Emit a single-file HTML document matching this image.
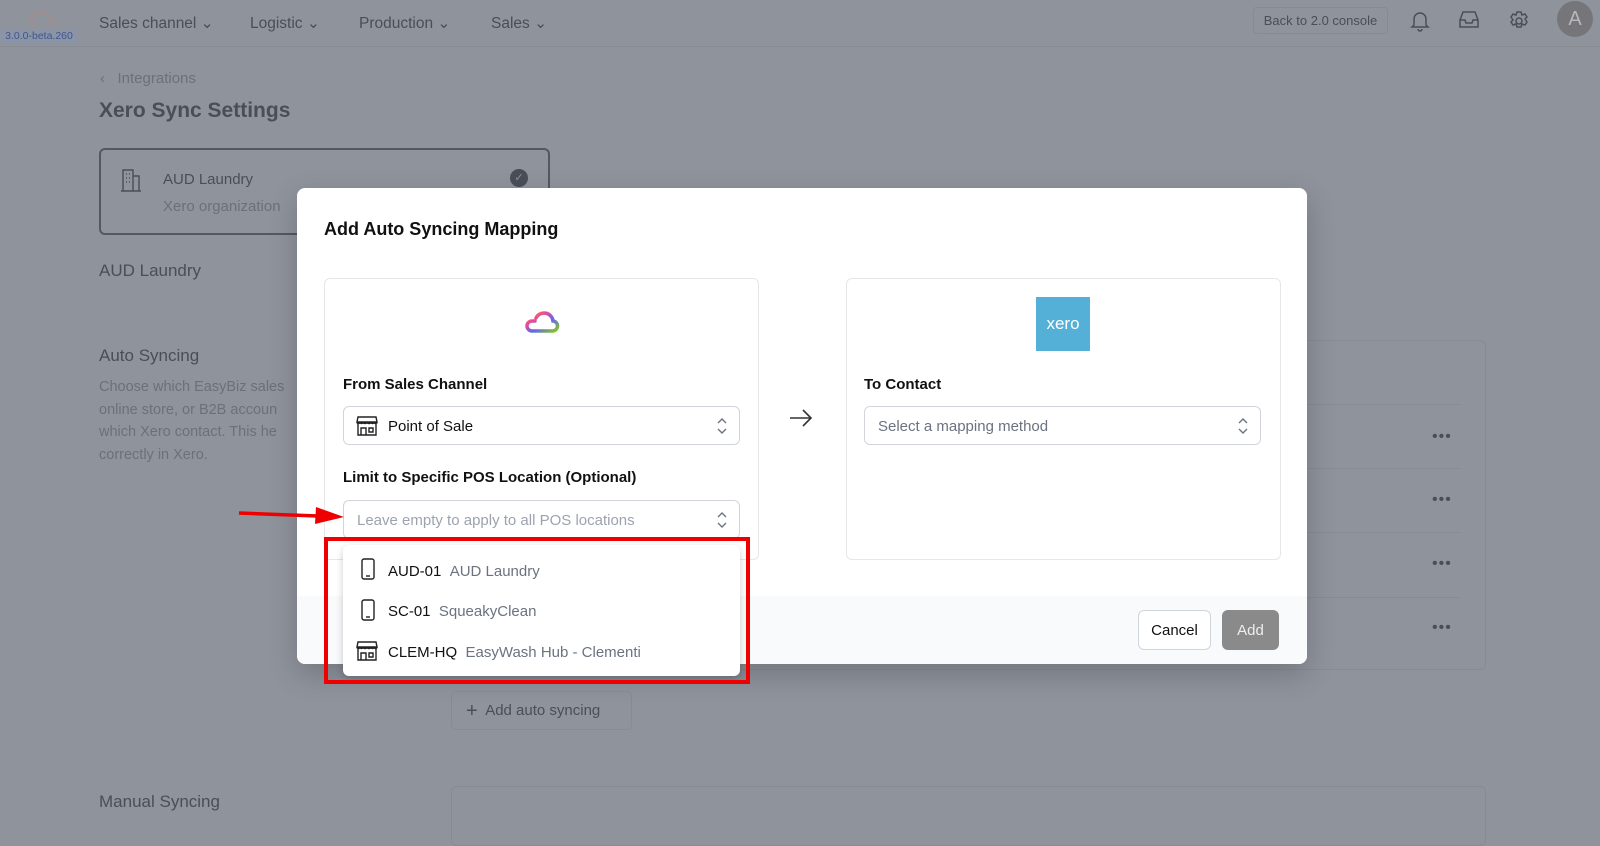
<!DOCTYPE html>
<html><head><style>
*{box-sizing:border-box;margin:0;padding:0}
body{width:1600px;height:819px;overflow:hidden;background:#8f939c;font-family:"Liberation Sans",sans-serif;position:relative;color:#111}
.a{position:absolute}
.bgt{color:#4a4e58}
.lt{color:#6b7079}
.sel{position:absolute;border:1px solid #d1d5db;border-radius:6px;background:#fff;height:39px;display:flex;align-items:center;font-size:15px;padding-top:2px}
.chev{position:absolute;right:12px;top:10px}
.dots{position:absolute;left:1432px;color:#4a4e58;font-size:16px;letter-spacing:1px}
</style></head><body>
<!-- header -->
<div class="a" style="left:0;top:0;width:1600px;height:47px;border-bottom:1px solid #878b94"></div>
<svg class="a" style="left:26px;top:8px" width="30" height="24" viewBox="0 0 30 24"><path d="M9 17 a5 5 0 0 1 1-10 a7 7 0 0 1 13 2 a4 4 0 0 1 0 8" fill="none" stroke="#a08e8e" stroke-width="3" opacity=".8"/></svg>
<div class="a" style="left:0;top:29px;width:78px;height:15px;background:#8a94a6;border-radius:3px;font-size:10.5px;color:#3f5590;text-align:center;line-height:15px">3.0.0-beta.260</div>
<div class="a bgt" style="left:99px;top:14px;font-size:15.5px">Sales channel ⌄</div>
<div class="a bgt" style="left:250px;top:14px;font-size:15.5px">Logistic ⌄</div>
<div class="a bgt" style="left:359px;top:14px;font-size:15.5px">Production ⌄</div>
<div class="a bgt" style="left:491px;top:14px;font-size:15.5px">Sales ⌄</div>
<div class="a bgt" style="left:1253px;top:7px;width:135px;height:27px;border:1px solid #868a93;border-radius:4px;font-size:13px;line-height:25px;text-align:center">Back to 2.0 console</div>
<svg class="a" style="left:1410px;top:10px" width="20" height="22" viewBox="0 0 20 22" fill="none" stroke="#4a4e58" stroke-width="1.5"><path d="M4 15V9a6 6 0 0 1 12 0v6l2 2H2z M8 19a2 2 0 0 0 4 0"/></svg>
<svg class="a" style="left:1458px;top:10px" width="22" height="20" viewBox="0 0 22 20" fill="none" stroke="#4a4e58" stroke-width="1.5"><path d="M2 10l3-8h12l3 8v7H2z M2 10h5l1 3h6l1-3h5"/></svg>
<svg class="a" style="left:1508px;top:10px" width="22" height="22" viewBox="0 0 22 22" fill="none" stroke="#4a4e58" stroke-width="1.5"><circle cx="11" cy="11" r="3"/><path d="M9 2h4l1 3 3-1 2 3-2 2 2 3-2 3-3-1-1 3H9l-1-3-3 1-2-3 2-2-2-3 2-3 3 1z"/></svg>
<div class="a" style="left:1557px;top:1px;width:36px;height:36px;border-radius:50%;background:#76767a;color:#b8b8bc;font-size:20px;text-align:center;line-height:36px">A</div>
<!-- background page -->
<div class="a lt" style="left:100px;top:70px;font-size:15px">‹&nbsp;&nbsp;&nbsp;Integrations</div>
<div class="a bgt" style="left:99px;top:99px;font-size:21px;font-weight:bold">Xero Sync Settings</div>
<div class="a" style="left:99px;top:148px;width:451px;height:87px;border:2px solid #545862;border-radius:6px"></div>
<svg class="a" style="left:120px;top:168px" width="22" height="24" viewBox="0 0 22 24" fill="none" stroke="#4a4e58" stroke-width="1.4"><path d="M1 23h20M3 23V2h10v21M13 8h6v15M6 6h1M9 6h1M6 10h1M9 10h1M6 14h1M9 14h1"/></svg>
<div class="a bgt" style="left:163px;top:171px;font-size:15px">AUD Laundry</div>
<div class="a lt" style="left:163px;top:198px;font-size:15px">Xero organization</div>
<div class="a" style="left:510px;top:169px;width:18px;height:18px;border-radius:50%;background:#4a4e58;color:#8f939c;font-size:11px;text-align:center;line-height:18px">✓</div>
<div class="a bgt" style="left:99px;top:261px;font-size:17px">AUD Laundry</div>
<div class="a bgt" style="left:99px;top:346px;font-size:17px">Auto Syncing</div>
<div class="a lt" style="left:99px;top:376px;font-size:14.5px;line-height:22.5px;width:200px">Choose which EasyBiz sales online store, or B2B accoun which Xero contact. This he correctly in Xero.</div>
<div class="a" style="left:451px;top:340px;width:1035px;height:330px;border:1px solid #878b94;border-radius:6px"></div>
<div class="a" style="left:1290px;top:404px;width:170px;border-top:1px solid #878b94"></div>
<div class="a" style="left:1290px;top:468px;width:170px;border-top:1px solid #878b94"></div>
<div class="a" style="left:1290px;top:532px;width:170px;border-top:1px solid #878b94"></div>
<div class="a" style="left:1290px;top:597px;width:170px;border-top:1px solid #878b94"></div>
<div class="dots" style="top:428px">•••</div>
<div class="dots" style="top:491px">•••</div>
<div class="dots" style="top:555px">•••</div>
<div class="dots" style="top:619px">•••</div>
<div class="a bgt" style="left:451px;top:691px;width:181px;height:39px;border:1px solid #878b94;border-radius:5px;font-size:15px;line-height:37px;padding-left:14px"><span style="font-size:20px;vertical-align:-2px">+</span>&nbsp; Add auto syncing</div>
<div class="a bgt" style="left:99px;top:792px;font-size:17px">Manual Syncing</div>
<div class="a" style="left:451px;top:786px;width:1035px;height:60px;border:1px solid #878b94;border-radius:6px"></div>
<!-- modal -->
<div class="a" style="left:297px;top:188px;width:1010px;height:476px;background:#fff;border-radius:8px;overflow:hidden;box-shadow:0 10px 30px rgba(0,0,0,.2)">
 <div class="a" style="left:0;top:408px;width:100%;height:68px;background:#f9fafb"></div>
</div>
<div class="a" style="left:324px;top:219px;font-size:18px;font-weight:bold;color:#111">Add Auto Syncing Mapping</div>
<div class="a" style="left:324px;top:278px;width:435px;height:282px;border:1px solid #e5e7eb;border-radius:6px;background:#fff"></div>
<div class="a" style="left:846px;top:278px;width:435px;height:282px;border:1px solid #e5e7eb;border-radius:6px;background:#fff"></div>
<svg class="a" style="left:521px;top:309px" width="42" height="30" viewBox="0 0 42 30"><defs><linearGradient id="g" x1="0" x2="1" y1="0" y2="1"><stop offset="0" stop-color="#f59e0b"/><stop offset=".3" stop-color="#ec4899"/><stop offset=".6" stop-color="#6366f1"/><stop offset="1" stop-color="#84cc16"/></linearGradient></defs><path d="M14 12 h-3 a5 5 0 0 0 0 10 h20 a5 5 0 0 0 1-10 a9 9 0 0 0-17-3" fill="none" stroke="url(#g)" stroke-width="3.5" stroke-linecap="round"/></svg>
<div class="a" style="left:1036px;top:297px;width:54px;height:54px;background:#54b0d6;color:#fff;font-size:17px;text-align:center;line-height:54px">xero</div>
<div class="a" style="left:343px;top:376px;font-size:15px;font-weight:bold;color:#111">From Sales Channel</div>
<div class="a" style="left:864px;top:376px;font-size:15px;font-weight:bold;color:#111">To Contact</div>
<div class="sel" style="left:343px;top:406px;width:397px;padding-left:44px">Point of Sale
 <svg class="chev" width="10" height="18" viewBox="0 0 10 18" fill="none" stroke="#6b7280" stroke-width="1.4"><path d="M1 6l4-4 4 4M1 12l4 4 4-4"/></svg></div>
<svg class="a" style="left:356px;top:416px" width="22" height="20" viewBox="0 0 22 20" fill="none" stroke="#222" stroke-width="1.4"><path d="M2 1h18l1 5H1zM1 6c0 2 3 2 3 0 0 2 3 2 3 0 0 2 4 2 4 0 0 2 4 2 4 0 0 2 3 2 3 0 0 2 3 2 3 0M2 8v11h18V8M5 19v-7h5v7M13 12h4v4h-4z"/></svg>
<div class="sel" style="left:864px;top:406px;width:397px;padding-left:13px;color:#6b7280">Select a mapping method
 <svg class="chev" width="10" height="18" viewBox="0 0 10 18" fill="none" stroke="#6b7280" stroke-width="1.4"><path d="M1 6l4-4 4 4M1 12l4 4 4-4"/></svg></div>
<div class="a" style="left:343px;top:469px;font-size:15px;font-weight:bold;color:#111">Limit to Specific POS Location (Optional)</div>
<div class="sel" style="left:343px;top:500px;width:397px;padding-left:13px;color:#9ca3af">Leave empty to apply to all POS locations
 <svg class="chev" width="10" height="18" viewBox="0 0 10 18" fill="none" stroke="#6b7280" stroke-width="1.4"><path d="M1 6l4-4 4 4M1 12l4 4 4-4"/></svg></div>
<svg class="a" style="left:788px;top:408px" width="26" height="20" viewBox="0 0 26 20" fill="none" stroke="#333" stroke-width="1.6"><path d="M2 10h21M15 2l8 8-8 8"/></svg>
<div class="a" style="left:1138px;top:610px;width:73px;height:40px;background:#fff;border:1px solid #d1d5db;border-radius:6px;font-size:15px;text-align:center;line-height:40px;color:#111">Cancel</div>
<div class="a" style="left:1222px;top:610px;width:57px;height:40px;background:#8a8a8a;border-radius:6px;font-size:15px;text-align:center;line-height:41px;color:#eee">Add</div>
<!-- dropdown -->
<div class="a" style="left:343px;top:545px;width:397px;height:131px;background:#fff;border-radius:6px;box-shadow:0 3px 8px rgba(0,0,0,.2)"></div>
<svg class="a" style="left:361px;top:558px" width="14" height="22" viewBox="0 0 14 22" fill="none" stroke="#222" stroke-width="1.4"><rect x="1" y="1" width="12" height="20" rx="2"/><path d="M5 18h4"/></svg>
<div class="a" style="left:388px;top:563px;font-size:15px;color:#111">AUD-01&nbsp;&nbsp;<span style="color:#6b7280">AUD Laundry</span></div>
<svg class="a" style="left:361px;top:599px" width="14" height="22" viewBox="0 0 14 22" fill="none" stroke="#222" stroke-width="1.4"><rect x="1" y="1" width="12" height="20" rx="2"/><path d="M5 18h4"/></svg>
<div class="a" style="left:388px;top:603px;font-size:15px;color:#111">SC-01&nbsp;&nbsp;<span style="color:#6b7280">SqueakyClean</span></div>
<svg class="a" style="left:356px;top:641px" width="22" height="20" viewBox="0 0 22 20" fill="none" stroke="#222" stroke-width="1.4"><path d="M2 1h18l1 5H1zM1 6c0 2 3 2 3 0 0 2 3 2 3 0 0 2 4 2 4 0 0 2 4 2 4 0 0 2 3 2 3 0 0 2 3 2 3 0M2 8v11h18V8M5 19v-7h5v7M13 12h4v4h-4z"/></svg>
<div class="a" style="left:388px;top:644px;font-size:15px;color:#111">CLEM-HQ&nbsp;&nbsp;<span style="color:#6b7280">EasyWash Hub - Clementi</span></div>
<!-- annotations -->
<div class="a" style="left:324px;top:537px;width:426px;height:147px;border:4px solid #ee0000"></div>
<svg class="a" style="left:230px;top:498px" width="120" height="26" viewBox="0 0 120 26"><path d="M9 15 L88 18" stroke="#ee0000" stroke-width="3.5"/><path d="M86 9 L114 19 L85 26z" fill="#ee0000"/></svg>
</body></html>
